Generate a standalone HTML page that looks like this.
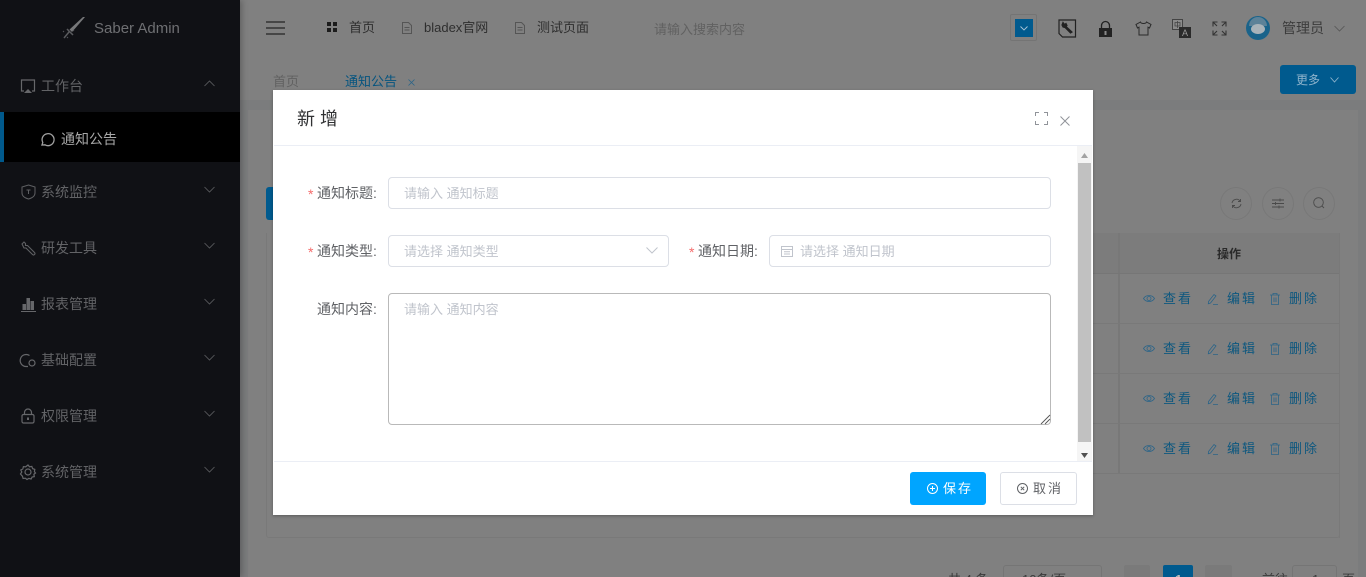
<!DOCTYPE html>
<html lang="zh">
<head>
<meta charset="utf-8">
<title>Saber Admin</title>
<style>
html,body{margin:0;padding:0;width:1366px;height:577px;overflow:hidden;background:#808080}
body{position:relative;font-family:"Liberation Sans","Noto Sans CJK SC",sans-serif;font-size:14px;color:#333}
.a{position:absolute;white-space:nowrap}
svg{position:absolute;overflow:visible;fill:none}
.m{position:absolute;left:41px;color:#626366;font-size:14px;line-height:20px;height:20px;white-space:nowrap}
.act{position:absolute;color:#0c577f;font-size:13px;line-height:16px;letter-spacing:2px;white-space:nowrap}
.inp{position:absolute;background:#fff;border:1px solid #dcdfe6;border-radius:4px;box-sizing:border-box}
.ph{position:absolute;color:#c0c4cc;font-size:13px;line-height:20px;white-space:nowrap}
.lb{position:absolute;color:#606266;font-size:14px;line-height:20px;white-space:nowrap}
.st{position:absolute;color:#f56c6c;font-size:14px;line-height:20px}
.e{stroke:#2b6488;stroke-width:.8}
</style>
</head>
<body>

<!-- page background -->
<div class="a" style="left:240px;top:100px;width:1126px;height:477px;background:#7b7c7d"></div>
<div class="a" style="left:248px;top:110px;width:1110px;height:467px;background:#808080"></div>

<!-- sidebar -->
<div class="a" style="left:0;top:0;width:240px;height:577px;background:#101115;box-shadow:2px 0 6px rgba(0,0,0,.25)"></div>
<svg style="left:62px;top:16px" width="24" height="24" viewBox="0 0 24 24"><path d="M23 1L10 16l-2.500-2.500L21 1z" fill="#77787a"/><path d="M5 13l6 6M7 16l-5 6" stroke="#5a5b5e" stroke-width="1.500"/><path d="M1 15l1 1M5 21l1 1M11 14l1 1" stroke="#55565a"/></svg>
<div class="a" style="left:94px;top:19px;font-size:15px;line-height:20px;color:#6e6f72">Saber Admin</div>

<svg style="left:20px;top:79px" width="16" height="15" viewBox="0 0 16 15" stroke="#66676a" stroke-width="1.200"><path d="M4 12H1.500V1h13v11H12"/><path d="M4 14l4-4 4 4z" fill="#66676a" stroke="none"/></svg>
<div class="m" style="top:76px">工作台</div>
<svg style="left:204px;top:80px" width="11" height="7" viewBox="0 0 11 7" stroke="#5e5f62" stroke-width=".8"><path d="M.5 6L5.500 1l5 5"/></svg>

<div class="a" style="left:0;top:112px;width:240px;height:50px;background:#000"></div>
<div class="a" style="left:0;top:112px;width:4px;height:50px;background:#00598c"></div>
<svg style="left:40px;top:132px" width="15" height="15" viewBox="0 0 15 15" stroke="#a0a0a0" stroke-width="1.300"><path d="M2 13l.8-2.500A6 6 0 1 1 5 12.800z"/></svg>
<div class="a" style="left:61px;top:129px;font-size:14px;line-height:20px;color:#a8a8a8">通知公告</div>

<svg style="left:21px;top:184px" width="15" height="16" viewBox="0 0 15 16" stroke="#5f6063" stroke-width="1"><path d="M7.500 1L14 3v6c0 3-3 5-6.500 6C4 14 1 12 1 9V3z"/><path d="M5.500 6h4M7.500 6v4"/></svg>
<div class="m" style="top:182px">系统监控</div>
<svg style="left:204px;top:186px" width="11" height="7" viewBox="0 0 11 7" stroke="#5e5f62" stroke-width=".8"><path d="M.5 1l5 5 5-5"/></svg>

<svg style="left:21px;top:241px" width="15" height="15" viewBox="0 0 15 15" stroke="#5f6063" stroke-width="1.100"><path d="M1 3l2-2 1.500 1.500v2H6.500L13.500 11.500a1.400 1.400 0 0 1-2 2L5 7H3z"/></svg>
<div class="m" style="top:238px">研发工具</div>
<svg style="left:204px;top:242px" width="11" height="7" viewBox="0 0 11 7" stroke="#5e5f62" stroke-width=".8"><path d="M.5 1l5 5 5-5"/></svg>

<svg style="left:21px;top:297px" width="15" height="15" viewBox="0 0 15 15"><rect x="1.500" y="7" width="3.500" height="6" fill="#66676a"/><rect x="5.500" y="1" width="3.500" height="12" fill="#66676a"/><rect x="9.500" y="4" width="3.500" height="9" fill="#66676a"/><rect x="0" y="14" width="15" height="1" fill="#66676a"/></svg>
<div class="m" style="top:294px">报表管理</div>
<svg style="left:204px;top:298px" width="11" height="7" viewBox="0 0 11 7" stroke="#5e5f62" stroke-width=".8"><path d="M.5 1l5 5 5-5"/></svg>

<svg style="left:20px;top:353px" width="16" height="15" viewBox="0 0 16 15" stroke="#66676a" stroke-width="1.200"><path d="M9.500 2.500A6 6 0 1 0 6 13.500h2"/><circle cx="12" cy="10" r="3"/></svg>
<div class="m" style="top:350px">基础配置</div>
<svg style="left:204px;top:354px" width="11" height="7" viewBox="0 0 11 7" stroke="#5e5f62" stroke-width=".8"><path d="M.5 1l5 5 5-5"/></svg>

<svg style="left:21px;top:408px" width="14" height="16" viewBox="0 0 14 16" stroke="#66676a" stroke-width="1.200"><rect x="1" y="6.500" width="12" height="8.500" rx="1.500"/><path d="M3.500 6.500V4.500a3.500 3.500 0 0 1 7 0v2"/><path d="M7 9.500v2.500" stroke-width="2"/></svg>
<div class="m" style="top:406px">权限管理</div>
<svg style="left:204px;top:410px" width="11" height="7" viewBox="0 0 11 7" stroke="#5e5f62" stroke-width=".8"><path d="M.5 1l5 5 5-5"/></svg>

<svg style="left:20px;top:464px" width="16" height="16" viewBox="0 0 16 16" stroke="#66676a" stroke-width="1.200"><path d="M8 1l1.500 1.800 2.300-.4.800 2.200 2.200.8-.4 2.300L15.500 9l-1.600 1.300.4 2.300-2.200.4-1 2-2.300-.6L7 15.500l-1.600-1.300-2.300.3-.6-2.200L.5 10 1.800 8 .8 6l2-1 .6-2.300 2.200.2z"/><circle cx="8" cy="8" r="3"/></svg>
<div class="m" style="top:462px">系统管理</div>
<svg style="left:204px;top:466px" width="11" height="7" viewBox="0 0 11 7" stroke="#5e5f62" stroke-width=".8"><path d="M.5 1l5 5 5-5"/></svg>

<!-- top nav -->
<svg style="left:266px;top:21px" width="19" height="14" viewBox="0 0 19 14" stroke="#333" stroke-width="1.600"><path d="M0 1h19M0 7h19M0 13h19"/></svg>
<svg style="left:327px;top:22px" width="10" height="10" viewBox="0 0 10 10"><rect width="4" height="4" fill="#1c1c1c"/><rect x="6" width="4" height="4" fill="#1c1c1c"/><rect y="6" width="4" height="4" fill="#1c1c1c"/><rect x="6" y="6" width="4" height="4" fill="#1c1c1c"/></svg>
<div class="a" style="left:349px;top:18px;font-size:13px;line-height:20px;color:#2e2e2e">首页</div>
<svg style="left:402px;top:22px" width="10" height="12" viewBox="0 0 10 12" stroke="#555"><path d="M.5.500H6.500L9.500 3.500V11.500H.5zM2.500 5.500h5M2.500 8h5"/></svg>
<div class="a" style="left:424px;top:18px;font-size:13px;line-height:20px;color:#2e2e2e">bladex官网</div>
<svg style="left:515px;top:22px" width="10" height="12" viewBox="0 0 10 12" stroke="#555"><path d="M.5.500H6.500L9.500 3.500V11.500H.5zM2.500 5.500h5M2.500 8h5"/></svg>
<div class="a" style="left:537px;top:18px;font-size:13px;line-height:20px;color:#2e2e2e">测试页面</div>
<div class="a" style="left:654px;top:20px;font-size:13px;line-height:20px;color:#616161">请输入搜索内容</div>

<!-- top right -->
<div class="a" style="left:1010px;top:14px;width:27px;height:27px;box-sizing:border-box;border:1px solid #747474;border-radius:2px"></div>
<div class="a" style="left:1015px;top:19px;width:18px;height:18px;background:#005a8e"></div>
<svg style="left:1020px;top:26px" width="8" height="5" viewBox="0 0 8 5" stroke="#a9c4d6" stroke-width=".9"><path d="M.5.500L4 4 7.500.500"/></svg>
<svg style="left:1058px;top:19px" width="19" height="19" viewBox="0 0 19 19" stroke="#222" stroke-width="1.200"><path d="M1 4V1h16.500v14.500M1 1v13.500L4.500 18h13v-2.500"/><path d="M5 3.500l1.500 2 1.500-1 1 2-1 1L14 13l-1.500 1L7 8.500 5 8 4 6z" fill="#222"/></svg>
<svg style="left:1098px;top:21px" width="15" height="16" viewBox="0 0 15 16"><path d="M3.500 7V4.500a4 4 0 0 1 8 0V7" stroke="#222" stroke-width="1.300"/><path d="M1 7h13v9H1z" fill="#222"/><rect x="6.500" y="10" width="2" height="4" fill="#888"/></svg>
<svg style="left:1135px;top:21px" width="17" height="15" viewBox="0 0 17 15" stroke="#2a2a2a" stroke-width="1"><path d="M5.500 1L1 3.500l1.500 3.500L4 6.200V14h9V6.200l1.500.8L16 3.500 11.500 1C11 3 6 3 5.500 1z"/></svg>
<svg style="left:1172px;top:19px" width="19" height="19" viewBox="0 0 19 19"><rect x=".5" y=".5" width="10" height="10" fill="#8a8a8a" stroke="#444"/><path d="M3 3.500h5v3.500H3zM5.500 2v7" stroke="#444" stroke-width=".8"/><rect x="7" y="8" width="12" height="11" fill="#2a2a2a"/><text x="10" y="17" font-family="Liberation Sans" font-size="9" fill="#999">A</text></svg>
<svg style="left:1212px;top:21px" width="15" height="15" viewBox="0 0 15 15" stroke="#333" stroke-width="1.100"><path d="M5.500 1H1v4.500M1 1l4 4M9.500 1H14v4.500M14 1l-4 4M5.500 14H1V9.500M1 14l4-4M9.500 14H14V9.500M14 14l-4-4"/></svg>
<div class="a" style="left:1246px;top:16px;width:24px;height:24px;border-radius:50%;background:#1a638a"></div>
<div class="a" style="left:1249px;top:17px;width:18px;height:9px;border-radius:9px 9px 0 0;background:#5d8298"></div>
<div class="a" style="left:1251px;top:24px;width:14px;height:10px;border-radius:50%;background:#a9b3b9"></div>
<div class="a" style="left:1282px;top:18px;line-height:20px;color:#3c3c3c">管理员</div>
<svg style="left:1334px;top:25px" width="11" height="7" viewBox="0 0 11 7" stroke="#555" stroke-width=".8"><path d="M.5 1l5 5 5-5"/></svg>

<!-- tabs -->
<div class="a" style="left:273px;top:72px;font-size:13px;line-height:20px;color:#616161">首页</div>
<div class="a" style="left:345px;top:72px;font-size:13px;line-height:20px;color:#05547f">通知公告</div>
<svg style="left:408px;top:79px" width="7" height="7" viewBox="0 0 7 7" stroke="#2b6488" stroke-width=".8"><path d="M.5.500l6 6M6.500.500l-6 6"/></svg>
<div class="a" style="left:1280px;top:65px;width:76px;height:29px;background:#005a8e;border-radius:3px"></div>
<div class="a" style="left:1296px;top:71px;font-size:12px;line-height:19px;color:#8fb4cc">更多</div>
<svg style="left:1330px;top:77px" width="9" height="6" viewBox="0 0 9 6" stroke="#8fb4cc" stroke-width=".9"><path d="M.5.500L4.500 5 8.500.500"/></svg>

<!-- toolbar buttons behind modal -->
<div class="a" style="left:266px;top:187px;width:12px;height:33px;background:#005a8e;border-radius:3px 0 0 3px"></div>
<div class="a" style="left:1220px;top:187px;width:32px;height:33px;box-sizing:border-box;border:1px solid #787878;border-radius:50%"></div>
<div class="a" style="left:1262px;top:187px;width:32px;height:33px;box-sizing:border-box;border:1px solid #787878;border-radius:50%"></div>
<div class="a" style="left:1303px;top:187px;width:32px;height:33px;box-sizing:border-box;border:1px solid #787878;border-radius:50%"></div>
<svg style="left:1231px;top:198px" width="11" height="11" viewBox="0 0 11 11" stroke="#4a4a4a" stroke-width=".9"><path d="M1 5a4.500 4.500 0 0 1 8-2M10 6a4.500 4.500 0 0 1-8 2M9.500 1v2.500H7M1.500 10V7.500H4"/></svg>
<svg style="left:1272px;top:198px" width="12" height="11" viewBox="0 0 12 11" stroke="#4a4a4a" stroke-width=".9"><path d="M0 2h12M0 5.500h12M0 9h12M8 .5v3M3.500 4v3M7 7.500v3"/></svg>
<svg style="left:1313px;top:197px" width="12" height="12" viewBox="0 0 12 12" stroke="#4a4a4a" stroke-width=".9"><circle cx="5.500" cy="5.500" r="4.800"/><path d="M9 9l2 2"/></svg>

<!-- table -->
<div class="a" style="left:266px;top:233px;width:1074px;height:305px;box-sizing:border-box;border:1px solid #797979;border-top:none;border-radius:0 0 3px 3px"></div>
<div class="a" style="left:1093px;top:233px;width:247px;height:40px;background:#7c7c7c"></div>
<div class="a" style="left:1118px;top:233px;width:2px;height:240px;background:#787878"></div>
<div class="a" style="left:1093px;top:273px;width:247px;height:1px;background:#767676"></div>
<div class="a" style="left:1093px;top:323px;width:247px;height:1px;background:#797979"></div>
<div class="a" style="left:1093px;top:373px;width:247px;height:1px;background:#797979"></div>
<div class="a" style="left:1093px;top:423px;width:247px;height:1px;background:#797979"></div>
<div class="a" style="left:1093px;top:473px;width:247px;height:1px;background:#797979"></div>
<div class="a" style="left:1339px;top:233px;width:1px;height:305px;background:#797979"></div>
<div class="a" style="left:1217px;top:246px;font-size:12px;line-height:16px;font-weight:bold;color:#2a2a2a">操作</div>

<!-- row actions -->
<svg style="left:1143px;top:294px" width="12" height="9" viewBox="0 0 12 9" class="e"><path d="M.5 4.500C3 .5 9 .5 11.500 4.500 9 8.500 3 8.500.5 4.500z"/><circle cx="6" cy="4.500" r="2"/></svg>
<div class="act" style="left:1163px;top:291px">查看</div>
<svg style="left:1207px;top:293px" width="12" height="12" viewBox="0 0 12 12" class="e"><path d="M1.500 8.500L7 1.500l2 1.500L3.500 10l-2.200.8zM6 11.500h5"/></svg>
<div class="act" style="left:1227px;top:291px">编辑</div>
<svg style="left:1270px;top:293px" width="10" height="12" viewBox="0 0 10 12" class="e"><path d="M0 2h10M3 2V.5h4V2M1.500 2v9.500h7V2M4 4.500v4.500M6 4.500v4.500"/></svg>
<div class="act" style="left:1289px;top:291px">删除</div>

<svg style="left:1143px;top:344px" width="12" height="9" viewBox="0 0 12 9" class="e"><path d="M.5 4.500C3 .5 9 .5 11.500 4.500 9 8.500 3 8.500.5 4.500z"/><circle cx="6" cy="4.500" r="2"/></svg>
<div class="act" style="left:1163px;top:341px">查看</div>
<svg style="left:1207px;top:343px" width="12" height="12" viewBox="0 0 12 12" class="e"><path d="M1.500 8.500L7 1.500l2 1.500L3.500 10l-2.200.8zM6 11.500h5"/></svg>
<div class="act" style="left:1227px;top:341px">编辑</div>
<svg style="left:1270px;top:343px" width="10" height="12" viewBox="0 0 10 12" class="e"><path d="M0 2h10M3 2V.5h4V2M1.500 2v9.500h7V2M4 4.500v4.500M6 4.500v4.500"/></svg>
<div class="act" style="left:1289px;top:341px">删除</div>

<svg style="left:1143px;top:394px" width="12" height="9" viewBox="0 0 12 9" class="e"><path d="M.5 4.500C3 .5 9 .5 11.500 4.500 9 8.500 3 8.500.5 4.500z"/><circle cx="6" cy="4.500" r="2"/></svg>
<div class="act" style="left:1163px;top:391px">查看</div>
<svg style="left:1207px;top:393px" width="12" height="12" viewBox="0 0 12 12" class="e"><path d="M1.500 8.500L7 1.500l2 1.500L3.500 10l-2.200.8zM6 11.500h5"/></svg>
<div class="act" style="left:1227px;top:391px">编辑</div>
<svg style="left:1270px;top:393px" width="10" height="12" viewBox="0 0 10 12" class="e"><path d="M0 2h10M3 2V.5h4V2M1.500 2v9.500h7V2M4 4.500v4.500M6 4.500v4.500"/></svg>
<div class="act" style="left:1289px;top:391px">删除</div>

<svg style="left:1143px;top:444px" width="12" height="9" viewBox="0 0 12 9" class="e"><path d="M.5 4.500C3 .5 9 .5 11.500 4.500 9 8.500 3 8.500.5 4.500z"/><circle cx="6" cy="4.500" r="2"/></svg>
<div class="act" style="left:1163px;top:441px">查看</div>
<svg style="left:1207px;top:443px" width="12" height="12" viewBox="0 0 12 12" class="e"><path d="M1.500 8.500L7 1.500l2 1.500L3.500 10l-2.200.8zM6 11.500h5"/></svg>
<div class="act" style="left:1227px;top:441px">编辑</div>
<svg style="left:1270px;top:443px" width="10" height="12" viewBox="0 0 10 12" class="e"><path d="M0 2h10M3 2V.5h4V2M1.500 2v9.500h7V2M4 4.500v4.500M6 4.500v4.500"/></svg>
<div class="act" style="left:1289px;top:441px">删除</div>

<!-- pagination -->
<div class="a" style="left:948px;top:571px;font-size:13px;line-height:18px;color:#3a3a3a">共 4 条</div>
<div class="a" style="left:1003px;top:565px;width:99px;height:30px;box-sizing:border-box;border:1px solid #757575;border-radius:3px"></div>
<div class="a" style="left:1022px;top:571px;font-size:13px;line-height:18px;color:#3a3a3a">10条/页</div>
<div class="a" style="left:1124px;top:565px;width:26px;height:28px;background:#7a7a7a;border-radius:2px"></div>
<div class="a" style="left:1163px;top:565px;width:30px;height:28px;background:#005a8e;border-radius:2px"></div>
<div class="a" style="left:1175px;top:571px;font-size:13px;line-height:18px;font-weight:bold;color:#bbb">1</div>
<div class="a" style="left:1205px;top:565px;width:27px;height:28px;background:#7a7a7a;border-radius:2px"></div>
<div class="a" style="left:1262px;top:571px;font-size:13px;line-height:18px;color:#3a3a3a">前往</div>
<div class="a" style="left:1292px;top:565px;width:45px;height:30px;box-sizing:border-box;border:1px solid #757575;border-radius:3px"></div>
<div class="a" style="left:1312px;top:571px;font-size:13px;line-height:18px;color:#3a3a3a">1</div>
<div class="a" style="left:1342px;top:571px;font-size:13px;line-height:18px;color:#3a3a3a">页</div>

<!-- modal -->
<div class="a" style="left:273px;top:90px;width:820px;height:425px;background:#fff;box-shadow:0 1px 3px rgba(0,0,0,.3)"></div>
<div class="a" style="left:297px;top:107px;font-size:18px;line-height:24px;color:#303133">新 增</div>
<svg style="left:1035px;top:112px" width="13" height="13" viewBox="0 0 13 13" stroke="#909399"><path d="M.5 4V.5H4M9 .5h3.500V4M.5 9v3.500H4M9 12.500h3.500V9"/></svg>
<svg style="left:1060px;top:116px" width="10" height="10" viewBox="0 0 10 10" stroke="#909399"><path d="M.5.500l9 9M9.500.500l-9 9"/></svg>
<div class="a" style="left:274px;top:145px;width:818px;height:1px;background:#ebeef5"></div>

<!-- scrollbar -->
<div class="a" style="left:1077px;top:146px;width:15px;height:315px;background:#f5f5f5"></div>
<div class="a" style="left:1078px;top:163px;width:13px;height:279px;background:#c1c1c1"></div>
<svg style="left:1081px;top:153px" width="7" height="5" viewBox="0 0 7 5"><path d="M3.500 0L7 5H0z" fill="#a3a3a3"/></svg>
<svg style="left:1081px;top:453px" width="7" height="5" viewBox="0 0 7 5"><path d="M0 0H7L3.500 5z" fill="#505050"/></svg>

<!-- form -->
<div class="st" style="left:308px;top:184px">*</div>
<div class="lb" style="left:317px;top:183px">通知标题:</div>
<div class="inp" style="left:388px;top:177px;width:663px;height:32px"></div>
<div class="ph" style="left:404px;top:184px">请输入 通知标题</div>

<div class="st" style="left:308px;top:242px">*</div>
<div class="lb" style="left:317px;top:241px">通知类型:</div>
<div class="inp" style="left:388px;top:235px;width:281px;height:32px"></div>
<div class="ph" style="left:404px;top:242px">请选择 通知类型</div>
<svg style="left:646px;top:247px" width="12" height="7" viewBox="0 0 12 7" stroke="#c0c4cc"><path d="M.5.500L6 6 11.500.500"/></svg>

<div class="st" style="left:689px;top:242px">*</div>
<div class="lb" style="left:698px;top:241px">通知日期:</div>
<div class="inp" style="left:769px;top:235px;width:282px;height:32px"></div>
<svg style="left:781px;top:245px" width="12" height="12" viewBox="0 0 12 12" stroke="#c0c4cc"><path d="M.5 1.500h11v10H.5zM.5 4.500h11M3 6.800h6M3 9h6"/></svg>
<div class="ph" style="left:800px;top:242px">请选择 通知日期</div>

<div class="lb" style="left:317px;top:299px">通知内容:</div>
<div class="inp" style="left:388px;top:293px;width:663px;height:132px;border-color:#b9b9b9"></div>
<div class="ph" style="left:404px;top:300px">请输入 通知内容</div>
<svg style="left:1041px;top:415px" width="9" height="9" viewBox="0 0 9 9" stroke="#555" stroke-width=".9"><path d="M0 9l9-9M4 9l5-5"/></svg>

<!-- footer -->
<div class="a" style="left:274px;top:461px;width:818px;height:1px;background:#ebeef5"></div>
<div class="a" style="left:910px;top:472px;width:76px;height:33px;background:#00a5ff;border-radius:3px"></div>
<svg style="left:927px;top:483px" width="11" height="11" viewBox="0 0 11 11" stroke="#fff"><circle cx="5.500" cy="5.500" r="5"/><path d="M3 5.500h5M5.500 3v5"/></svg>
<div class="a" style="left:943px;top:481px;font-size:13px;line-height:16px;letter-spacing:2px;color:#fff">保存</div>
<div class="a" style="left:1000px;top:472px;width:77px;height:33px;box-sizing:border-box;background:#fff;border:1px solid #dcdfe6;border-radius:3px"></div>
<svg style="left:1017px;top:483px" width="11" height="11" viewBox="0 0 11 11" stroke="#606266"><circle cx="5.500" cy="5.500" r="5"/><path d="M3.800 3.800l3.400 3.400M7.200 3.800L3.800 7.200"/></svg>
<div class="a" style="left:1033px;top:481px;font-size:13px;line-height:16px;letter-spacing:2px;color:#606266">取消</div>

</body>
</html>
